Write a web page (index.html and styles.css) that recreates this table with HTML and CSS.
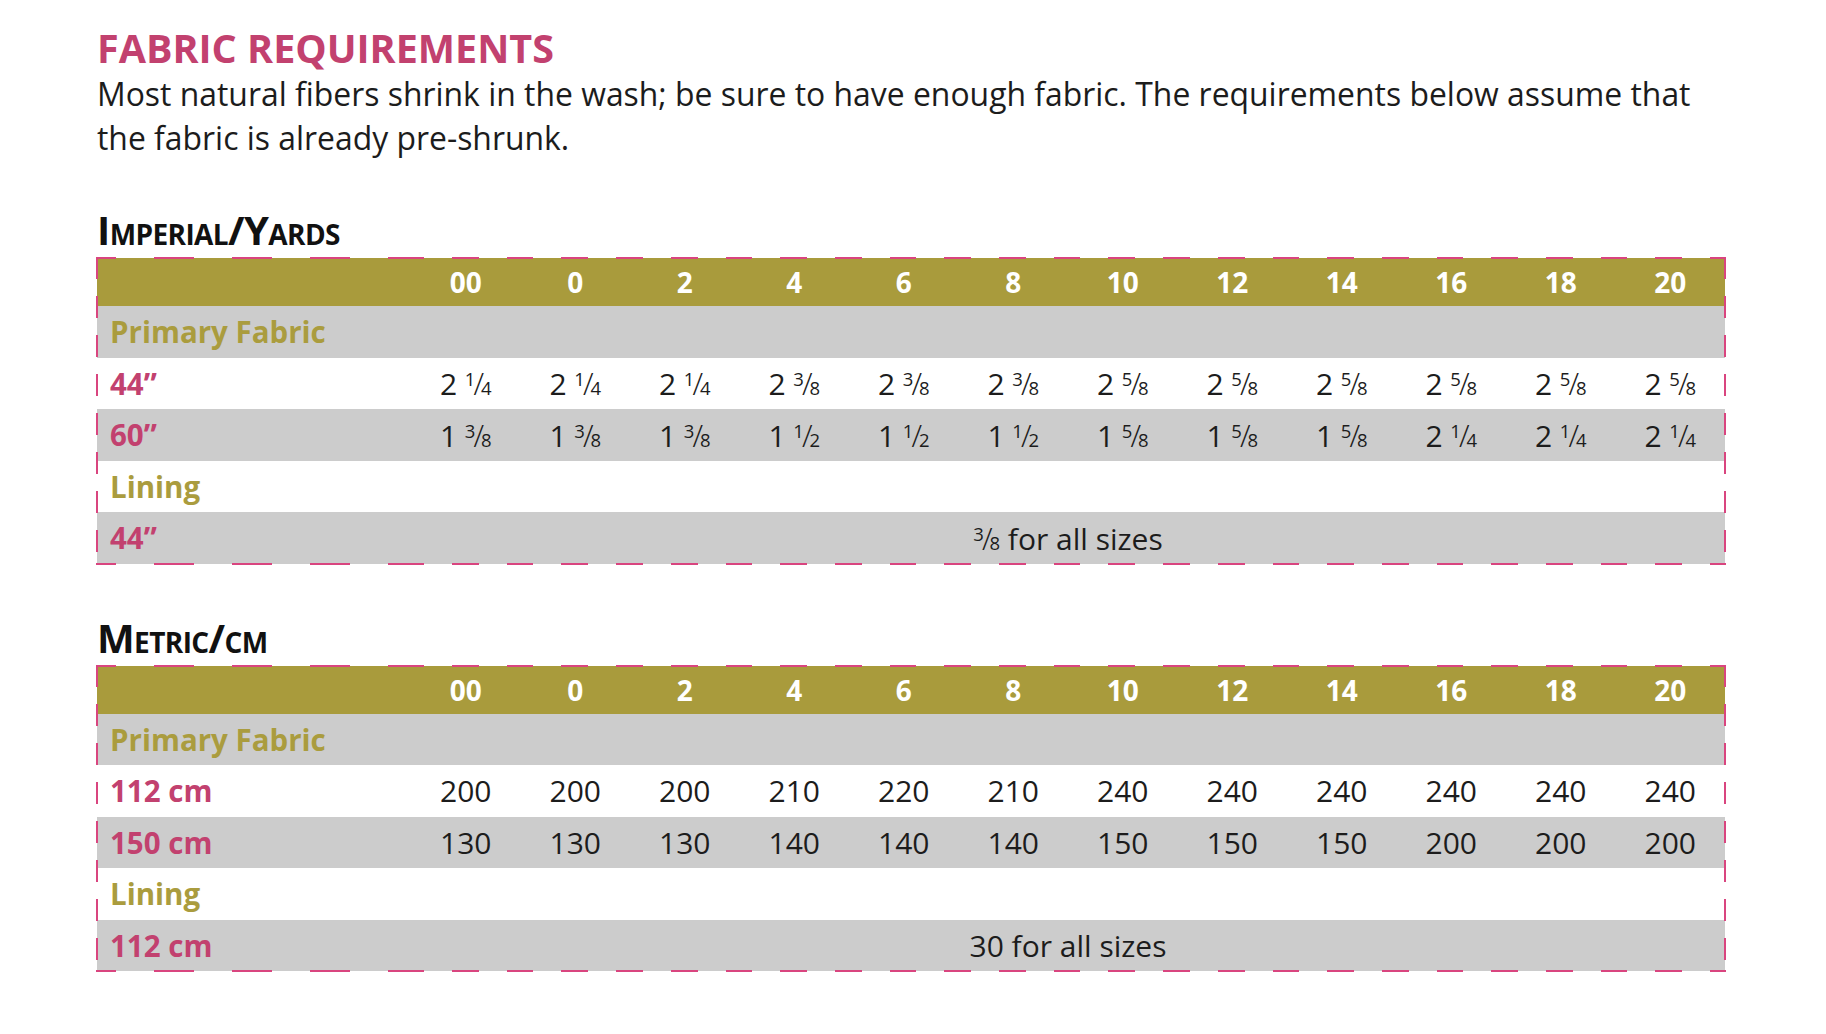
FILE: index.html
```html
<!DOCTYPE html>
<html lang="en">
<head>
<meta charset="utf-8">
<title>Fabric Requirements</title>
<link rel="stylesheet" href="styles.css">
</head>
<body>
<main class="page">
  <h1 class="title">FABRIC REQUIREMENTS</h1>
  <p class="intro">Most natural fibers shrink in the wash; be sure to have enough fabric. The requirements below assume that the fabric is already pre-shrunk.</p>

  <section class="size-table">
    <h2 class="section-title">Imperial/Yards</h2>
    <div class="chart">
      <table>
        <colgroup><col class="label-col"><col span="12"></colgroup>
        <thead>
          <tr><th></th><th>00</th><th>0</th><th>2</th><th>4</th><th>6</th><th>8</th><th>10</th><th>12</th><th>14</th><th>16</th><th>18</th><th>20</th></tr>
        </thead>
        <tbody>
          <tr class="shade"><th class="row-label group" colspan="13">Primary Fabric</th></tr>
          <tr><th class="row-label width">44”</th>
            <td>2 <span class="frac"><span class="num">1</span><span class="slash">/</span><span class="den">4</span></span></td>
            <td>2 <span class="frac"><span class="num">1</span><span class="slash">/</span><span class="den">4</span></span></td>
            <td>2 <span class="frac"><span class="num">1</span><span class="slash">/</span><span class="den">4</span></span></td>
            <td>2 <span class="frac"><span class="num">3</span><span class="slash">/</span><span class="den">8</span></span></td>
            <td>2 <span class="frac"><span class="num">3</span><span class="slash">/</span><span class="den">8</span></span></td>
            <td>2 <span class="frac"><span class="num">3</span><span class="slash">/</span><span class="den">8</span></span></td>
            <td>2 <span class="frac"><span class="num">5</span><span class="slash">/</span><span class="den">8</span></span></td>
            <td>2 <span class="frac"><span class="num">5</span><span class="slash">/</span><span class="den">8</span></span></td>
            <td>2 <span class="frac"><span class="num">5</span><span class="slash">/</span><span class="den">8</span></span></td>
            <td>2 <span class="frac"><span class="num">5</span><span class="slash">/</span><span class="den">8</span></span></td>
            <td>2 <span class="frac"><span class="num">5</span><span class="slash">/</span><span class="den">8</span></span></td>
            <td>2 <span class="frac"><span class="num">5</span><span class="slash">/</span><span class="den">8</span></span></td>
          </tr>
          <tr class="shade"><th class="row-label width">60”</th>
            <td>1 <span class="frac"><span class="num">3</span><span class="slash">/</span><span class="den">8</span></span></td>
            <td>1 <span class="frac"><span class="num">3</span><span class="slash">/</span><span class="den">8</span></span></td>
            <td>1 <span class="frac"><span class="num">3</span><span class="slash">/</span><span class="den">8</span></span></td>
            <td>1 <span class="frac"><span class="num">1</span><span class="slash">/</span><span class="den">2</span></span></td>
            <td>1 <span class="frac"><span class="num">1</span><span class="slash">/</span><span class="den">2</span></span></td>
            <td>1 <span class="frac"><span class="num">1</span><span class="slash">/</span><span class="den">2</span></span></td>
            <td>1 <span class="frac"><span class="num">5</span><span class="slash">/</span><span class="den">8</span></span></td>
            <td>1 <span class="frac"><span class="num">5</span><span class="slash">/</span><span class="den">8</span></span></td>
            <td>1 <span class="frac"><span class="num">5</span><span class="slash">/</span><span class="den">8</span></span></td>
            <td>2 <span class="frac"><span class="num">1</span><span class="slash">/</span><span class="den">4</span></span></td>
            <td>2 <span class="frac"><span class="num">1</span><span class="slash">/</span><span class="den">4</span></span></td>
            <td>2 <span class="frac"><span class="num">1</span><span class="slash">/</span><span class="den">4</span></span></td>
          </tr>
          <tr><th class="row-label group" colspan="13">Lining</th></tr>
          <tr class="shade"><th class="row-label width">44”</th><td colspan="12"><span class="frac"><span class="num">3</span><span class="slash">/</span><span class="den">8</span></span> for all sizes</td></tr>
        </tbody>
      </table>
    </div>
  </section>

  <section class="size-table">
    <h2 class="section-title">Metric/cm</h2>
    <div class="chart">
      <table>
        <colgroup><col class="label-col"><col span="12"></colgroup>
        <thead>
          <tr><th></th><th>00</th><th>0</th><th>2</th><th>4</th><th>6</th><th>8</th><th>10</th><th>12</th><th>14</th><th>16</th><th>18</th><th>20</th></tr>
        </thead>
        <tbody>
          <tr class="shade"><th class="row-label group" colspan="13">Primary Fabric</th></tr>
          <tr><th class="row-label width">112 cm</th><td>200</td><td>200</td><td>200</td><td>210</td><td>220</td><td>210</td><td>240</td><td>240</td><td>240</td><td>240</td><td>240</td><td>240</td></tr>
          <tr class="shade"><th class="row-label width">150 cm</th><td>130</td><td>130</td><td>130</td><td>140</td><td>140</td><td>140</td><td>150</td><td>150</td><td>150</td><td>200</td><td>200</td><td>200</td></tr>
          <tr><th class="row-label group" colspan="13">Lining</th></tr>
          <tr class="shade"><th class="row-label width">112 cm</th><td colspan="12">30 for all sizes</td></tr>
        </tbody>
      </table>
    </div>
  </section>
</main>
</body>
</html>
```

FILE: styles.css
```css
html, body {
  margin: 0;
  padding: 0;
  background: #ffffff;
}

body {
  font-family: "Open Sans", "Noto Sans", "DejaVu Sans", sans-serif;
  color: #1c1c1c;
}

.page {
  width: 1628px;
  padding: 24px 0 40px 97px;
}

.title {
  margin: 0;
  font-size: 39.5px;
  line-height: 48px;
  font-weight: 700;
  color: #c2416f;
}

.intro {
  margin: 0;
  font-size: 31.9px;
  line-height: 44px;
  font-weight: 400;
}

.size-table {
  margin-top: 46px;
}

.size-table + .size-table {
  margin-top: 50px;
}

.section-title {
  margin: 0 0 4px;
  font-size: 40px;
  line-height: 48px;
  font-weight: 700;
  letter-spacing: -0.6px;
  font-variant: small-caps;
  color: #111111;
}

.chart {
  position: relative;
}

.chart::after {
  content: "";
  position: absolute;
  left: -1px;
  right: -1px;
  top: -1px;
  bottom: -1px;
  pointer-events: none;
  background:
    repeating-linear-gradient(90deg, #d9457f 0 20px, transparent 20px 58px, #d9457f 58px 78px) 0 0 / 315px 2px no-repeat,
    repeating-linear-gradient(90deg, #d9457f 0 13px, transparent 13px 41px, #d9457f 41px 54.7px) 315px 0 / calc(100% - 315px) 2px no-repeat,
    repeating-linear-gradient(90deg, #d9457f 0 20px, transparent 20px 58px, #d9457f 58px 78px) 0 100% / 315px 2px no-repeat,
    repeating-linear-gradient(90deg, #d9457f 0 13px, transparent 13px 41px, #d9457f 41px 54.7px) 315px 100% / calc(100% - 315px) 2px no-repeat,
    repeating-linear-gradient(180deg, #d9457f 0 22px, transparent 22px 39px) 0 0 / 2px 100% no-repeat,
    repeating-linear-gradient(180deg, #d9457f 0 22px, transparent 22px 39px) 100% 0 / 2px 100% no-repeat;
}

table {
  width: 1628px;
  border-collapse: collapse;
  table-layout: fixed;
}

.label-col {
  width: 314px;
}

th, td {
  padding: 0;
}

thead th {
  height: 48px;
  background: #a99b3c;
  color: #ffffff;
  font-size: 28px;
  font-weight: 700;
  text-align: center;
  vertical-align: middle;
}

tbody tr {
  height: 51.5px;
}

tbody td {
  font-size: 30px;
  font-weight: 400;
  text-align: center;
  vertical-align: middle;
}

.frac {
  white-space: nowrap;
}

.frac .num,
.frac .den {
  font-size: 18.5px;
}

.frac .num {
  vertical-align: 9px;
}

.frac .slash {
  font-size: 31px;
  font-weight: 300;
  margin: 0 -3px 0 -2px;
}

.shade {
  background: #cccccc;
}

.row-label {
  padding-left: 13px;
  text-align: left;
  font-size: 29.5px;
  font-weight: 700;
  vertical-align: middle;
}

.group {
  color: #aa9c3e;
}

.width {
  color: #c2416f;
}
```
